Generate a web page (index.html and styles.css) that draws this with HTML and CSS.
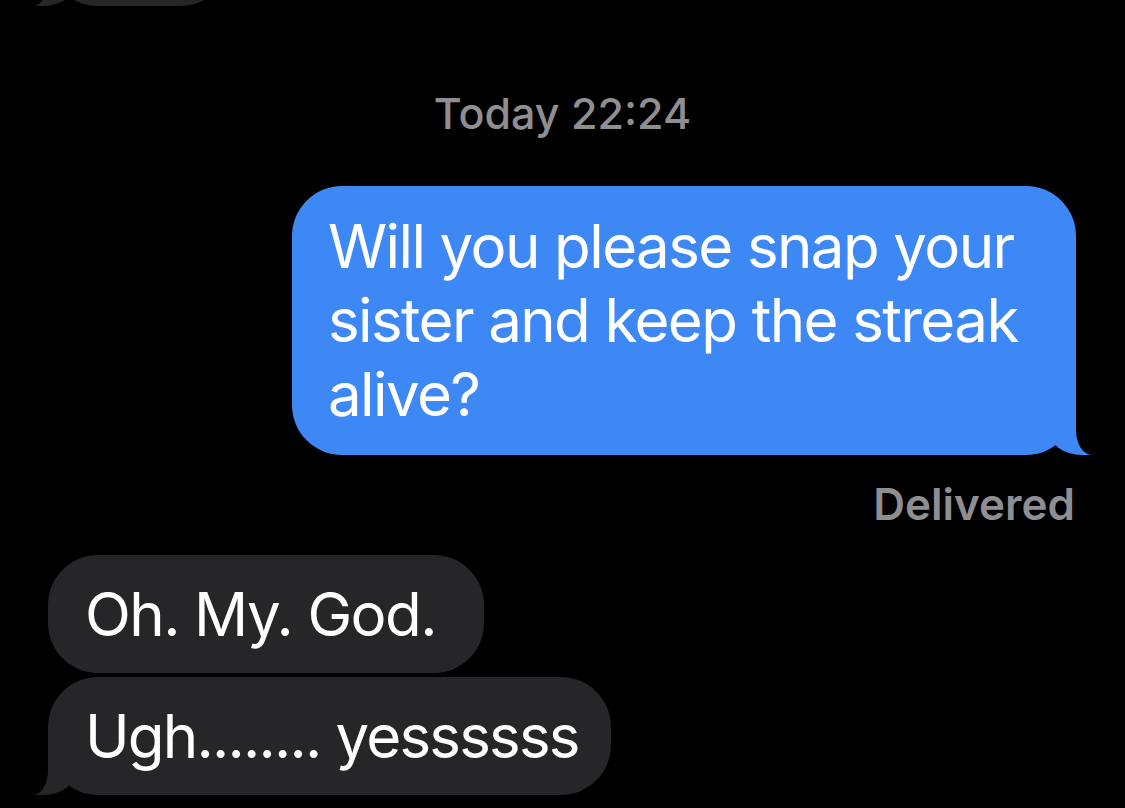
FILE: index.html
```html
<!DOCTYPE html>
<html lang="en">
	<head>
		<meta charset="utf-8">
		<title>Messages</title>
		<link rel="stylesheet" href="styles.css">
	</head>
	<body>
		<div id="thread">

			<div class="bubble received prev">&nbsp;</div>

			<div class="stamp">Today 22:24</div>

			<div class="bubble sent">Will you please snap your sister and keep the streak alive?</div>

			<div class="status">Delivered</div>

			<div class="bubble received first">Oh. My. God.</div>
			<div class="bubble received last">Ugh........ yessssss</div>

		</div>
	</body>
</html>
```

FILE: styles.css
```css
html * {margin:0; padding:0; box-sizing:border-box;}
html, body {background:#000; height:100%; overflow:hidden;}
body {font-family:Inter, "Noto Sans", sans-serif; color:#fff;}

div#thread {display:flex; flex-direction:column; width:1125px; height:808px; overflow:hidden;}

.bubble {position:relative; font-size:60px; line-height:74px; letter-spacing:-1.6px; border-radius:50px;}
.bubble.sent {align-self:flex-end; max-width:784px; margin:47px 49px 0 0; padding:23px 36px 24px 36px; background:#3e88f5;}
.bubble.received {align-self:flex-start; margin-left:48px; padding:22px 40px 22px 37px; background:#262628;}
.bubble.prev {width:182px; margin-top:-112px;}
.bubble.first {margin-top:24px; padding-right:48px;}
.bubble.last {margin-top:4px; padding-right:32px; letter-spacing:-1.8px;}

/* tails */
.bubble.sent::before, .bubble.sent::after,
.bubble.prev::before, .bubble.prev::after,
.bubble.last::before, .bubble.last::after {content:""; position:absolute; bottom:0; height:52px;}

.bubble.sent::before {right:-16px; width:44px; background:#3e88f5; border-bottom-left-radius:34px 26px;}
.bubble.sent::after {right:-29px; width:29px; background:#000; border-bottom-left-radius:16px 25px;}

.bubble.prev::before, .bubble.last::before {left:-15px; width:44px; background:#262628; border-bottom-right-radius:34px 26px;}
.bubble.prev::after, .bubble.last::after {left:-29px; width:29px; background:#000; border-bottom-right-radius:15px 25px;}

.stamp {align-self:center; margin-top:81px; font-size:43px; line-height:52px; font-weight:500; color:#8e8e93;}
.status {align-self:flex-end; margin:22px 50px 0 0; font-size:44px; line-height:54px; font-weight:600; color:#8e8e93;}
```
